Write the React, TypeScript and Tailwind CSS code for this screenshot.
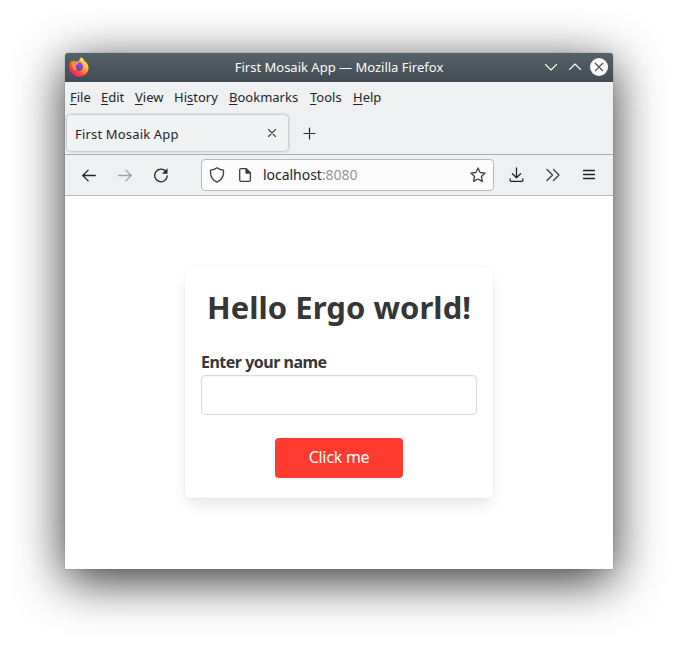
import React from "react";

const menus: [string, string, string, string][] = [
  ["", "F", "ile", "w-[31px]"],
  ["", "E", "dit", "w-[34px]"],
  ["", "V", "iew", "w-[39px]"],
  ["Hi", "s", "tory", "w-[55px]"],
  ["", "B", "ookmarks", "w-[81px]"],
  ["", "T", "ools", "w-[43px]"],
  ["", "H", "elp", "w-[40px]"],
];

function FirefoxLogo() {
  return (
    <svg width="20" height="20" viewBox="0 0 20 20" className="mb-[2px] shrink-0">
      <defs>
        <linearGradient id="fire" x1="0.85" y1="0.1" x2="0.2" y2="0.95">
          <stop offset="0" stopColor="#fff44f" />
          <stop offset="0.35" stopColor="#ffb02e" />
          <stop offset="0.65" stopColor="#ff5a36" />
          <stop offset="1" stopColor="#f5156c" />
        </linearGradient>
        <linearGradient id="globe" x1="0.6" y1="0" x2="0.4" y2="1">
          <stop offset="0" stopColor="#b04af0" />
          <stop offset="1" stopColor="#5443c4" />
        </linearGradient>
        <linearGradient id="fox" x1="0" y1="0" x2="1" y2="0.6">
          <stop offset="0" stopColor="#ff8a1e" />
          <stop offset="1" stopColor="#ffa02e" />
        </linearGradient>
      </defs>
      <path fill="url(#fire)" d="M12.6 0.3C14.2 1.6 15.1 3 15.5 4.2C16.2 4.6 16.7 5.1 17 5.2C18.8 7.1 19.8 9.3 19.5 11.6C19 16.4 15 19.8 10.1 19.8C4.8 19.8 .6 15.7 .4 10.5C.3 7.7 1.2 5.6 2.3 3.7L3.1 5C3.5 4.2 4.1 3.4 4.7 2.9C4.8 3.8 5.2 4.5 5.9 4.8C7.2 4.1 8.6 4.1 10.1 4.6C10.1 2.8 11 1.2 12.6.3Z" />
      <path fill="url(#globe)" d="M8.4 5.4C9.700 4.700 11.600 4.900 12.800 6.200C14.200 7.700 14.500 10.500 13.100 12.300C11.500 14.400 8.400 14.500 6.700 12.700C5.400 11.300 5.400 8.500 6.500 7Z" />
      <path fill="url(#fox)" d="M2.8 5.8C4 4.7 5.5 4.5 6.9 5.1C7.8 5 8.8 5.1 9.700 5.700C9.200 6.600 8.600 7.200 7.500 7.600C6.900 8.300 6.600 9 6.700 9.900C6.700 11.100 7.200 12.100 8.100 12.900C6.900 13.200 5.800 13 5 12.200C3.500 10.300 2.900 7.900 2.800 5.800Z" />
    </svg>
  );
}

type IconProps = { children: React.ReactNode; className?: string };
function Icon({ children, className = "" }: IconProps) {
  return (
    <svg width="16" height="16" viewBox="0 0 16 16" fill="none" stroke="currentColor" strokeWidth="1.3" strokeLinecap="round" strokeLinejoin="round" className={"shrink-0 " + className}>
      {children}
    </svg>
  );
}

export default function App() {
  return (
    <div className="h-[646px] w-[678px] overflow-hidden bg-white px-[65px] pt-[53px] font-['Noto_Sans',sans-serif] text-[#232629]">
      <div className="flex h-[516px] w-[548px] flex-col rounded-t-[3px] bg-white shadow-[0_0_1px_rgba(0,0,0,0.6),0_11px_50px_rgba(0,0,0,0.82)]">
        <header className="flex h-[29px] shrink-0 items-center rounded-t-[3px] bg-linear-to-b from-[#566168] to-[#434c54] pr-[5px] pl-1 text-[#fcfcfc]">
          <FirefoxLogo />
          <div className="ml-[71px] w-[358px] pb-px text-center text-[13px] leading-[18px] whitespace-nowrap">
            First Mosaik App — Mozilla Firefox
          </div>
          <div className="ml-auto flex items-center pb-px">
            <Icon><path d="M2.5 5.5 8 11l5.5-5.5" strokeWidth="1.1" /></Icon>
            <Icon className="ml-2"><path d="M2.5 10.5 8 5l5.5 5.5" strokeWidth="1.1" /></Icon>
            <svg width="18" height="18" viewBox="0 0 18 18" className="ml-[7px]">
              <circle cx="9" cy="9" r="9" fill="#fcfcfc" />
              <path d="m5 5 8 8m0-8-8 8" stroke="#475057" strokeWidth="1.1" />
            </svg>
          </div>
        </header>

        <nav className="flex h-[31px] shrink-0 items-center bg-[#eff0f2] pl-[5px] text-[13px]">
          {menus.map(([before, key, after, width]) => (
            <span key={key + after} className={"shrink-0 whitespace-nowrap " + width}>
              {before}
              <span className="underline decoration-1 underline-offset-2">{key}</span>
              {after}
            </span>
          ))}
        </nav>

        <div className="flex h-[42px] shrink-0 items-start border-b border-[#a9abad] bg-[#eff0f2] pt-[2px] pl-[2px]">
          <div className="flex h-[36px] w-[221px] items-center justify-between rounded-[4px] bg-[#f0f2f4] pr-2 pl-2 shadow-[0_0_3px_rgba(0,0,0,0.4)]">
            <span className="pt-[3px] text-[13px] tracking-[0.17px]">First Mosaik App</span>
            <Icon className="text-[#3b3e41]"><path d="m4.5 4.5 7 7m0-7-7 7" strokeWidth="1.1" /></Icon>
          </div>
          <Icon className="mt-[11px] ml-[14px]"><path d="M7.5 2v11M2 7.5h11" strokeWidth="1.2" /></Icon>
        </div>

        <div className="flex h-[41px] shrink-0 items-center border-b border-[#b8babc] bg-[#eff0f2] pl-4">
          <Icon className="mt-px"><path d="M14.3 7.5H1.7M7.2 2.1 1.7 7.5l5.5 5.4" /></Icon>
          <Icon className="mt-px ml-5 text-[#a0a2a4]"><path d="M1.7 7.5h12.6M8.8 2.1 14.3 7.5l-5.5 5.4" /></Icon>
          <Icon className="ml-5">
            <path d="M12.8 4.4A6.3 6.3 0 1 0 14.3 9" />
            <path d="M14.5 1.3v5.5H9z" fill="currentColor" stroke="none" />
          </Icon>
          <div className="ml-8 flex h-8 w-[293px] items-center rounded-[4px] border border-[#b8babc] bg-[#fcfcfc] px-[7px]">
            <Icon className="text-[#3b3e41]"><path d="M8 .8C9.8 2.2 12 2.9 14.5 3.1v2.6c0 4.3-2.4 7.4-6.5 9.4-4.1-2-6.5-5.1-6.5-9.4V3.1C4 2.9 6.2 2.2 8 .8Z" /></Icon>
            <Icon className="ml-3 text-[#3b3e41]">
              <path d="M4 1.7h5.2L13.4 6v7a1.3 1.3 0 0 1-1.3 1.3H4A1.3 1.3 0 0 1 2.7 13V3A1.3 1.3 0 0 1 4 1.7Z" />
              <path d="M9 1.8V6h4.3z" fill="currentColor" />
            </Icon>
            <span className="ml-[10px] text-[14px] leading-5 tracking-[-0.03px]">
              localhost<span className="text-[#949698]">:8080</span>
            </span>
            <Icon className="ml-auto text-[#3b3e41]"><path d="m8 1 2.1 4.5 5 .6-3.7 3.4 1 4.9L8 12l-4.4 2.4 1-4.9L.9 6.1l5-.6Z" /></Icon>
          </div>
          <Icon className="ml-[15px]"><path d="M7.5 .8v9.8M3.4 6.7l4.1 4 4.1-4M1.1 11.8v1.3c0 .7.5 1.2 1.2 1.2h10.4c.7 0 1.2-.5 1.2-1.2v-1.3" /></Icon>
          <Icon className="ml-5 text-[#3b3e41]"><path d="m2 2.500 5.500 5.500L2 13.500M8.500 2.500 14 8l-5.500 5.500" /></Icon>
          <Icon className="ml-5"><path d="M2.5 3.5h11M2.5 7.5h11M2.5 11.5h11" /></Icon>
        </div>

        <main className="flex flex-1 items-start justify-center bg-white pt-[71px] text-[#363636]">
          <section className="flex h-[231px] w-[308px] flex-col rounded-[6px] bg-white px-4 shadow-[0_8px_16px_-2px_rgba(10,10,10,0.1),0_0_0_1px_rgba(10,10,10,0.02)]">
            <h1 className="mt-[22px] text-center text-[31px] leading-[36px] font-bold tracking-[0.04px] whitespace-nowrap">Hello Ergo world!</h1>
            <label htmlFor="name" className="mt-[25px] text-[16px] leading-6 font-bold tracking-[-0.5px]">Enter your name</label>
            <input id="name" className="mt-px h-10 w-full rounded-[4px] border border-[#dbdbdb] bg-white px-3 shadow-[inset_0_1px_2px_rgba(10,10,10,0.05)]" />
            <button className="mt-[23px] h-10 w-32 self-center rounded-[4px] bg-[#ff3b30] pb-[2px] text-[16px] tracking-[-0.25px] text-white">Click me</button>
          </section>
        </main>
      </div>
    </div>
  );
}
